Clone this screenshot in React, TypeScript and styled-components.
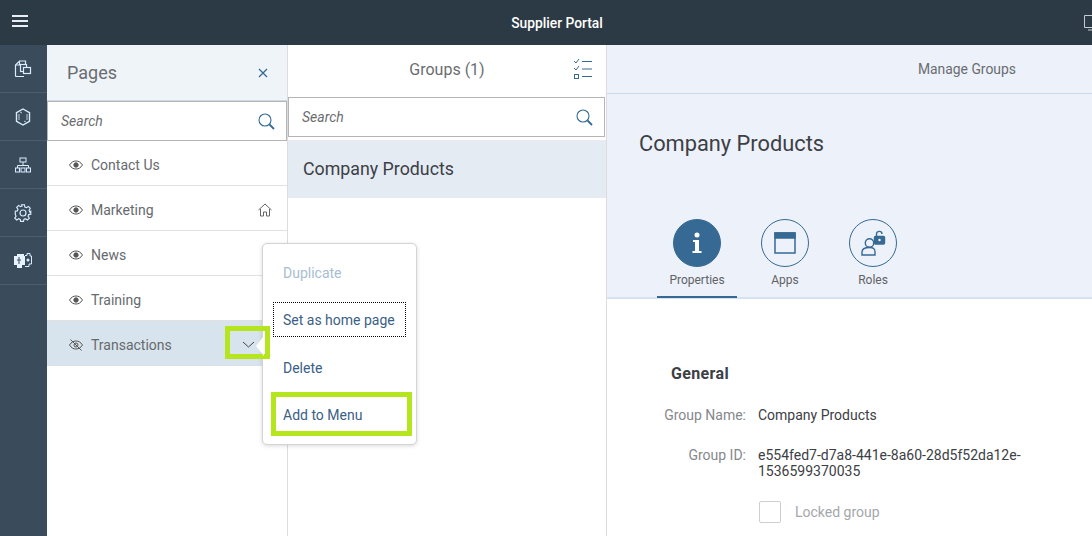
import React from "react";
import styled, { createGlobalStyle } from "styled-components";

const Global = createGlobalStyle`
  html, body { margin: 0; padding: 0; background: #fff; overflow: hidden; }
  * { box-sizing: border-box; }
  body { font-family: Roboto, "Noto Sans", "Liberation Sans", sans-serif; }
`;
const Page = styled.div`width:1092px;height:536px;overflow:hidden;display:flex;flex-direction:column;position:relative;`;
const TopBar = styled.header`height:45px;flex:none;background:#2c3a45;color:#fff;display:flex;align-items:center;position:relative;justify-content:center;padding-left:22px;font-size:13.8px;font-weight:500;`;
const Burger = styled.svg`position:absolute;left:11px;top:14px;`;
const TopRight = styled.svg`position:absolute;right:0;top:15px;`;
const Body = styled.div`flex:1;display:flex;min-height:0;position:relative;`;
const Rail = styled.nav`width:47px;flex:none;background:#3a4c5c;`;
const RailItem = styled.div`height:48px;border-bottom:1px solid #4d5f6f;display:flex;align-items:center;justify-content:center;padding-right:1px;`;
const PagesPanel = styled.section`width:241px;flex:none;border-right:1px solid #dcdcdc;display:flex;flex-direction:column;`;
const PagesHeader = styled.div`height:56px;background:#eff4f9;border-bottom:1px solid #c9d9e6;display:flex;align-items:center;justify-content:space-between;padding:0 19px 0 20px;font-size:18px;color:#6a6d70;`;
const Search = styled.div<{ $h: number; $inset?: number }>`height:${p => p.$h}px;flex:none;margin-right:${p => p.$inset ?? 0}px;border:1px solid #b5b5b5;background:#fff;display:flex;align-items:center;justify-content:space-between;padding:0 11px 0 13px;font-size:14px;font-style:italic;color:#6a6d70;`;
const Row = styled.div<{ $selected?: boolean }>`height:45px;flex:none;display:flex;align-items:center;padding:3px 15px 0 22px;gap:8px;font-size:14px;color:#666a6e;border-bottom:1px solid ${p => (p.$selected ? "#d8e4ed" : "#e1e1e1")};background:${p => (p.$selected ? "#d8e4ed" : "#fff")};`;
const RowLabel = styled.span`flex:1;`;
const Middle = styled.section`width:319px;flex:none;border-right:1px solid #dcdcdc;display:flex;flex-direction:column;`;
const MidHeader = styled.div`height:52px;display:flex;align-items:center;justify-content:center;position:relative;font-size:16px;color:#6a6d70;padding-bottom:4px;`;
const ListIcon = styled.svg`position:absolute;right:13px;top:13px;`;
const GroupItem = styled.div`margin-top:3px;height:58px;background:#e4ebf3;display:flex;align-items:center;padding:0 0 2px 15px;font-size:17.8px;color:#3c4045;`;
const Detail = styled.main`flex:1;min-width:0;display:flex;flex-direction:column;`;
const DetailTop = styled.div`height:254px;flex:none;background:#edf1f9;border-bottom:2px solid #d5e2f1;display:flex;flex-direction:column;`;
const Toolbar = styled.div`height:49px;flex:none;border-bottom:1px solid #c8dcee;display:flex;align-items:center;justify-content:flex-end;padding:0 76px 0 0;font-size:13.9px;color:#6a6d70;`;
const Title = styled.h1`margin:0;padding:37px 0 0 32px;height:125px;flex:none;font-size:21.8px;line-height:26px;font-weight:400;color:#3c4045;`;
const Tabs = styled.div`display:flex;padding-left:50px;`;
const Tab = styled.div<{ $active?: boolean }>`width:80px;margin-right:8px;height:79px;margin-bottom:-2px;display:flex;flex-direction:column;align-items:center;gap:6px;font-size:12px;color:#5f6367;border-bottom:2px solid ${p => (p.$active ? "#366a94" : "transparent")};`;
const Circle = styled.div<{ $active?: boolean }>`width:48px;height:48px;border-radius:50%;border:1px solid #366a94;background:${p => (p.$active ? "#366a94" : "transparent")};display:flex;align-items:center;justify-content:center;`;
const Form = styled.div`padding:65px 0 0 0;flex:1;`;
const Section = styled.h2`margin:0 0 23px 64px;font-size:16px;line-height:20px;font-weight:700;letter-spacing:.35px;color:#3c4045;`;
const Field = styled.div`display:grid;grid-template-columns:139px 280px;column-gap:12px;font-size:14px;line-height:16px;margin-bottom:24px;`;
const FieldLabel = styled.div`text-align:right;color:#85888c;`;
const FieldValue = styled.div`color:#3c4045;word-break:break-word;`;
const CheckRow = styled.div`display:flex;align-items:center;gap:14px;margin:-2px 0 0 152px;font-size:14px;color:#a5a7aa;`;
const Box = styled.div`width:22px;height:22px;border:1px solid #cfcfcf;border-radius:2px;background:#fff;`;
const Popover = styled.div`position:absolute;left:262px;top:198px;width:155px;height:202px;background:#fff;border:1px solid #d4d4d4;border-radius:5px;box-shadow:0 1px 4px rgba(0,0,0,.15);display:flex;flex-direction:column;padding:10px 0 0 10px;`;
const MenuItem = styled.div<{ $disabled?: boolean; $focus?: boolean }>`width:133px;height:36px;margin-bottom:12px;display:flex;align-items:center;padding:2px 0 0 9px;font-size:14px;color:${p => (p.$disabled ? "#a8bdd2" : "#3b6086")};border:1px dotted ${p => (p.$focus ? "#000" : "transparent")};white-space:nowrap;`;
const HighlightMenu = styled.div`position:absolute;left:271px;top:347px;width:141px;height:44px;border:5px solid #b5e61d;`;
const HighlightChevron = styled.div`position:absolute;left:225px;top:281px;width:45px;height:33px;border:5px solid #b5e61d;display:flex;align-items:center;justify-content:center;`;
const Chevron = styled.svg`margin:3px 0 0 2px;`;
const Notch = styled.div`position:absolute;left:256px;top:291px;width:0;height:0;border-top:10px solid transparent;border-bottom:10px solid transparent;border-right:8px solid #fff;`;

const Eye = () => <svg width="14" height="10" viewBox="0 0 14 10" fill="none" stroke="#555"><path d="M.5 5C2.5 2 4.5 1 7 1s4.5 1 6.500 4C11.500 8 9.500 9 7 9S2.500 8 .5 5z" /><circle cx="7" cy="5" r="2.200" fill="#555" /></svg>;
const EyeOff = () => <svg width="14" height="12" viewBox="0 0 14 12" fill="none" stroke="#555"><path d="M.5 6C2.500 3 4.500 2 7 2s4.500 1 6.500 4C11.500 9 9.500 10 7 10S2.500 9 .5 6z" /><circle cx="7" cy="6" r="2" /><path d="M1.500 .5l11 11" /></svg>;
const SearchIcon = () => <svg width="17" height="17" viewBox="0 0 17 17" fill="none"><circle cx="7" cy="7" r="6" stroke="#366a94" strokeWidth="1.100" /><path d="M11.500 11.500L16 16" stroke="#366a94" strokeWidth="1.800" /></svg>;

export default function App() {
  return (
    <Page>
      <Global />
      <TopBar>
        <Burger width="18" height="14" viewBox="0 0 18 14" stroke="#e8eef3" strokeWidth="2"><path d="M1 2h16M1 7h16M1 12h16" /></Burger>
        Supplier Portal
        <TopRight width="8" height="16" viewBox="0 0 8 16" fill="none" stroke="#c5ccd2"><path d="M8 .5H.5v12H8M4 15H8" /></TopRight>
      </TopBar>
      <Body>
        <Rail>
          <RailItem><svg width="18" height="18" viewBox="0 0 18 18" fill="none" stroke="#d9ecff" strokeWidth="1.200"><path d="M10 16.500H2.500c-1 0-1-.5-1-1V5l4-4h6v3" /><path d="M5.500 1.500V5H2" /><rect x="6.500" y="4.500" width="6" height="7" /><rect x="9.500" y="7.500" width="7" height="6" fill="#3a4c5c" /></svg></RailItem>
          <RailItem><svg width="16" height="18" viewBox="0 0 16 18" fill="none" stroke="#d9ecff" strokeWidth="1.400"><path d="M8 1l6.500 3.700v8.600L8 17l-6.500-3.700V4.700z" /><path d="M5 4l2 1M11 14l-2-1M4 6v6M12 12V6" strokeWidth=".8" /></svg></RailItem>
          <RailItem><svg width="16" height="16" viewBox="0 0 16 16" fill="none" stroke="#d9ecff"><rect x="5" y="1" width="6" height="4" /><path d="M8 5v4M2.500 11V8.500h11V11" /><rect x=".5" y="11" width="4" height="4" /><rect x="6" y="11" width="4" height="4" /><rect x="11.500" y="11" width="4" height="4" /></svg></RailItem>
          <RailItem><svg width="18" height="18" viewBox="0 0 18 18" fill="none" stroke="#d9ecff" strokeWidth="1.200"><circle cx="9" cy="9" r="3" /><path d="M7.500 1h3l.4 2.300 1.600.7 2-1.300 2 2-1.300 2 .7 1.600L17 7.700v3l-2.100.4-.7 1.600 1.300 2-2 2-2-1.300-1.600.7-.4 2.100h-3l-.4-2.100-1.600-.7-2 1.300-2-2 1.300-2-.7-1.600L1 10.700v-3l2.100-.4.700-1.600-1.300-2 2-2 2 1.300L8 2.300z" transform="translate(.3 -.2) scale(.97)" /></svg></RailItem>
          <RailItem><svg width="18" height="16" viewBox="0 0 18 16"><path d="M0 3h3V1h7v2h1v9H8v3H3v-3H0z" fill="#e6f2ff" /><path d="M11 2.500h2V.5h3v2.500h1.500v8H15v2.500h-4" fill="none" stroke="#d9ecff" /><circle cx="14" cy="7" r="1.500" fill="#d9ecff" /><path d="M5 4v7M3 7h4" stroke="#3a4c5c" /></svg></RailItem>
        </Rail>
        <PagesPanel>
          <PagesHeader>
            Pages
            <svg width="10" height="10" viewBox="0 0 10 10" stroke="#366a94" strokeWidth="1.300"><path d="M1 1l8 8M9 1l-8 8" /></svg>
          </PagesHeader>
          <Search $h={40}>Search<SearchIcon /></Search>
          <Row><Eye /><RowLabel>Contact Us</RowLabel></Row>
          <Row><Eye /><RowLabel>Marketing</RowLabel><svg width="14" height="14" viewBox="0 0 14 14" fill="none" stroke="#666"><path d="M.5 7L7 1l6.500 6M2.500 6v7h3V9h3v4h3V6" /></svg></Row>
          <Row><Eye /><RowLabel>News</RowLabel></Row>
          <Row><Eye /><RowLabel>Training</RowLabel></Row>
          <Row $selected><EyeOff /><RowLabel>Transactions</RowLabel></Row>
        </PagesPanel>
        <Middle>
          <MidHeader>
            Groups (1)
            <ListIcon width="20" height="22" viewBox="0 0 20 22" fill="none" stroke="#366a94"><path d="M1 3l2 2 3-4M1 10l2 2 3-4M9 3.500h10M9 11h10M9 18.500h10" /><rect x="1.500" y="16.500" width="4" height="4" /></ListIcon>
          </MidHeader>
          <Search $h={40} $inset={1}>Search<SearchIcon /></Search>
          <GroupItem>Company Products</GroupItem>
        </Middle>
        <Detail>
          <DetailTop>
            <Toolbar>Manage Groups</Toolbar>
            <Title>Company Products</Title>
            <Tabs>
              <Tab $active>
                <Circle $active><svg width="10" height="22" viewBox="0 0 10 22" fill="#fff"><circle cx="5" cy="3" r="2.500" /><path d="M1 8h6v11h2.500v2H.5v-2H3v-9H1z" /></svg></Circle>
                Properties
              </Tab>
              <Tab>
                <Circle><svg width="22" height="22" viewBox="0 0 22 22" fill="none" stroke="#366a94" strokeWidth="1.500"><rect x="1" y="1" width="20" height="20" /><rect x="1" y="1" width="20" height="5" fill="#366a94" /></svg></Circle>
                Apps
              </Tab>
              <Tab>
                <Circle><svg width="26" height="26" viewBox="0 0 26 26" fill="none" stroke="#366a94" strokeWidth="1.400"><circle cx="9.500" cy="13" r="4.200" /><path d="M2 25v-3c0-3 3-4.500 7.500-4.500S15 19 15 22v3z" /><rect x="14.500" y="6.500" width="10" height="7.500" rx="1" fill="#366a94" /><path d="M16.500 6.500V4c0-3.500 5.500-3.500 5.500 0" /><circle cx="19.500" cy="10" r="1.200" fill="#fff" stroke="none" /></svg></Circle>
                Roles
              </Tab>
            </Tabs>
          </DetailTop>
          <Form>
            <Section>General</Section>
            <Field><FieldLabel>Group Name:</FieldLabel><FieldValue>Company Products</FieldValue></Field>
            <Field><FieldLabel>Group ID:</FieldLabel><FieldValue>e554fed7-d7a8-441e-8a60-28d5f52da12e-<br />1536599370035</FieldValue></Field>
            <CheckRow><Box />Locked group</CheckRow>
          </Form>
        </Detail>
        <Popover>
          <MenuItem $disabled>Duplicate</MenuItem>
          <MenuItem $focus>Set as home page</MenuItem>
          <MenuItem>Delete</MenuItem>
          <MenuItem>Add to Menu</MenuItem>
        </Popover>
        <HighlightMenu />
        <HighlightChevron>
          <Chevron width="13" height="7" viewBox="0 0 13 7" fill="none" stroke="#444"><path d="M1 1l5.500 5L12 1" /></Chevron>
        </HighlightChevron>
        <Notch />
      </Body>
    </Page>
  );
}
